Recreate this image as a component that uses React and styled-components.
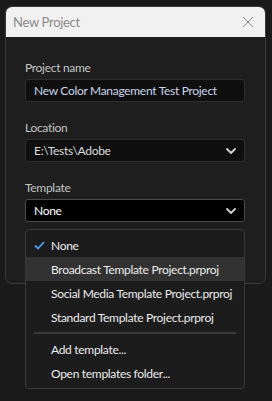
import React from 'react';
import styled, { createGlobalStyle } from 'styled-components';

const GlobalStyle = createGlobalStyle`
  html, body, #root {
    margin: 0;
    padding: 0;
    min-height: 100%;
    height: 100%;
  }
  html, body {
    background: #1a1a1a;
    font-family: Lato, "Noto Sans", sans-serif;
    letter-spacing: -0.3px;
  }
`;

const templates = [
  { id: 'none', name: 'None', checked: true },
  { id: 'broadcast', name: 'Broadcast Template Project.prproj', hover: true },
  { id: 'social', name: 'Social Media Template Project.prproj' },
  { id: 'standard', name: 'Standard Template Project.prproj' },
];

const actions = ['Add template...', 'Open templates folder...'];

const Chevron = () => (
  <svg width="10" height="6" viewBox="0 0 10 6">
    <path d="M1 1 L5 5 L9 1" fill="none" stroke="#d0d0d0" strokeWidth="1.8" strokeLinecap="round" strokeLinejoin="round" />
  </svg>
);

const CloseIcon = () => (
  <svg width="12" height="12" viewBox="0 0 12 12">
    <path d="M1 1 L11 11 M11 1 L1 11" stroke="#8a8a8a" strokeWidth="1" />
  </svg>
);

const CheckIcon = () => (
  <svg width="11" height="9" viewBox="0 0 11 9">
    <path d="M1 4.5 L4 7.5 L10 1" fill="none" stroke="#4c9bf5" strokeWidth="1.8" />
  </svg>
);

export default function App() {
  return (
    <>
      <GlobalStyle />
      <Page>
        <Dialog>
          <TitleBar>
            <Title>New Project</Title>
            <CloseButton><CloseIcon /></CloseButton>
          </TitleBar>
          <Body>
            <Field>
              <Label>Project name</Label>
              <TextInput>New Color Management Test Project</TextInput>
            </Field>
            <Field>
              <Label>Location</Label>
              <Select>
                <span>E:\Tests\Adobe</span>
                <Chevron />
              </Select>
            </Field>
            <Field>
              <Label>Template</Label>
              <SelectWrap>
                <Select open>
                  <span>None</span>
                  <Chevron />
                </Select>
                <Menu>
                  {templates.map((t) => (
                    <MenuItem key={t.id} hover={t.hover}>
                      <CheckSlot>{t.checked && <CheckIcon />}</CheckSlot>
                      {t.name}
                    </MenuItem>
                  ))}
                  <Separator />
                  {actions.map((a) => (
                    <MenuItem key={a}>
                      <CheckSlot />
                      {a}
                    </MenuItem>
                  ))}
                </Menu>
              </SelectWrap>
            </Field>
          </Body>
        </Dialog>
      </Page>
    </>
  );
}

const Page = styled.div`
  width: 272px;
  height: 401px;
  padding: 6px 0 0 5px;
  box-sizing: border-box;
  position: relative;
`;

const Dialog = styled.div`
  width: 261px;
  height: 278px;
  box-sizing: border-box;
  background: #1e1e1e;
  border: 1px solid #3a3a3a;
  border-radius: 7px;
  display: flex;
  flex-direction: column;
`;

const TitleBar = styled.div`
  height: 30px;
  background: #f1f1f1;
  border-radius: 6px 6px 0 0;
  display: flex;
  align-items: center;
  justify-content: space-between;
  padding: 0 10px 0 7px;
  flex-shrink: 0;
`;

const Title = styled.div`
  font-size: 13px;
  color: #8a8a8a;
`;

const CloseButton = styled.div`
  display: flex;
  align-items: center;
  justify-content: center;
  width: 14px;
  height: 14px;
`;

const Body = styled.div`
  padding: 23px 20px 0 19px;
  display: flex;
  flex-direction: column;
  gap: 18px;
`;

const Field = styled.div`
  display: flex;
  flex-direction: column;
  gap: 3px;
`;

const Label = styled.div`
  font-size: 12px;
  line-height: 16px;
  color: #c4c4c4;
`;

const TextInput = styled.div`
  height: 23px;
  box-sizing: border-box;
  background: #0f0f0f;
  border: 1px solid #2e2e2e;
  border-radius: 3px;
  padding: 0 8px;
  display: flex;
  align-items: center;
  font-size: 12px;
  color: #c9d6ea;
`;

const Select = styled.div`
  height: 23px;
  box-sizing: border-box;
  background: ${(p) => (p.open ? '#000000' : '#0f0f0f')};
  border: 1px solid ${(p) => (p.open ? '#4a4a4a' : '#2e2e2e')};
  border-radius: 3px;
  padding: 0 8px 0 8px;
  display: flex;
  align-items: center;
  justify-content: space-between;
  font-size: 12px;
  color: ${(p) => (p.open ? '#ffffff' : '#dcdcdc')};
`;

const SelectWrap = styled.div`
  position: relative;
`;

const Menu = styled.div`
  position: absolute;
  top: 30px;
  left: 0;
  width: 220px;
  box-sizing: border-box;
  background: #1c1c1c;
  border: 1px solid #3a3a3a;
  border-radius: 4px;
  padding: 3px 0;
  z-index: 2;
`;

const MenuItem = styled.div`
  height: 24px;
  display: flex;
  align-items: center;
  font-size: 12px;
  color: #ececec;
  background: ${(p) => (p.hover ? '#323232' : 'transparent')};
  white-space: nowrap;
`;

const CheckSlot = styled.div`
  width: 25px;
  padding-left: 8px;
  box-sizing: border-box;
  display: flex;
  align-items: center;
  flex-shrink: 0;
`;

const Separator = styled.div`
  height: 2px;
  background: #3a3a3a;
  margin: 3px 8px 3px 8px;
`;
